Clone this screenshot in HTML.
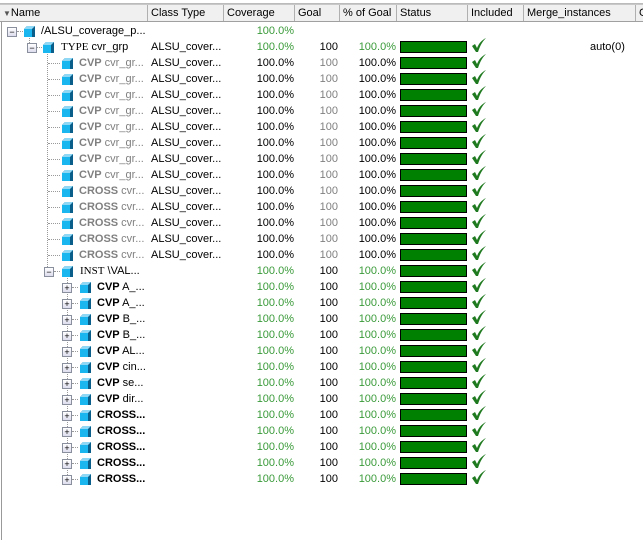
<!DOCTYPE html>
<html><head><meta charset="utf-8"><style>
body{margin:0;width:643px;height:540px;background:#fff;overflow:hidden;font-family:"Liberation Sans",sans-serif;font-size:11px;position:relative}
.a{position:absolute;white-space:nowrap}
.hd{position:absolute;top:4px;left:0;width:643px;height:16px;background:#f0f0f0;border-bottom:1px solid #a0a0a0;border-top:1px solid #c8c8c8}
.hc{position:absolute;top:0;height:16px;line-height:16px;border-right:1px solid #b0b0b0;padding-left:3px;box-sizing:border-box;color:#000}
.r{position:absolute;left:0;width:643px;height:16px;line-height:16px}
.ex{position:absolute;top:4px;width:8px;height:8px;border:1px solid #8a8f9e;background:linear-gradient(#fff,#dde);box-sizing:content-box;font-size:9px;line-height:8px;text-align:center;color:#000}
.ic{position:absolute;top:3px;width:11px;height:11px}
.g{color:#3a9a3a}.k{color:#000}.gr{color:#808080}
.n{position:absolute;text-align:right}
.bar{position:absolute;left:400px;top:2px;width:65px;height:10px;background:#008000;border:1px solid #000}
.ck{position:absolute;left:471px;top:-2px}
.vl{position:absolute;border-left:1px dotted #999}
.hl{position:absolute;border-top:1px dotted #999;height:0}
</style></head><body>
<div class="a" style="left:0;top:3px;width:643px;border-top:1px solid #bbb"></div>
<div class="a" style="left:1px;top:21px;height:519px;border-left:1px solid #999"></div>
<div class="hd">
<div class="hc" style="left:0;width:148px"><span style="font-size:8px;color:#555">▼</span>Name</div>
<div class="hc" style="left:148px;width:76px">Class Type</div>
<div class="hc" style="left:224px;width:71px">Coverage</div>
<div class="hc" style="left:295px;width:45px">Goal</div>
<div class="hc" style="left:340px;width:57px">% of Goal</div>
<div class="hc" style="left:397px;width:71px">Status</div>
<div class="hc" style="left:468px;width:56px">Included</div>
<div class="hc" style="left:524px;width:112px">Merge_instances</div>
<div class="hc" style="left:636px;width:20px">Ge</div>
</div>
<svg width="0" height="0" style="position:absolute"><defs><symbol id="cb" viewBox="0 0 11 11"><polygon points="3,0 11,0 11,11 0,11 0,3" fill="#0a5f8a"/><rect x="0" y="3" width="8" height="8" fill="#19b6f0"/><polygon points="0,3 3,0 11,0 8,3" fill="#8fd8f5"/></symbol>
<symbol id="tk" viewBox="0 0 16 16"><path d="M1 9 L4 7 L6 11 C8 6 11 3 15 1 C11 5 9 9 7 15 L5 15 Z" fill="#1f7a1f"/></symbol></defs></svg>
<div class="vl" style="left:29px;top:36px;height:11px"></div>
<div class="vl" style="left:47px;top:52px;height:219px"></div>
<div class="vl" style="left:67px;top:276px;height:203px"></div>

<div class="r" style="top:23px"><div class="ex" style="left:7px">−</div><div class="hl" style="left:17px;top:8px;width:6px"></div><svg class="ic" style="left:24px"><use href="#cb"/></svg><span class="a" style="left:41px">/ALSU_coverage_p...</span><span class="n g" style="left:224px;width:70px">100.0%</span></div>

<div class="r" style="top:39px"><div class="ex" style="left:27px">−</div><div class="hl" style="left:37px;top:8px;width:5px"></div><svg class="ic" style="left:43px"><use href="#cb"/></svg><span class="a" style="left:61px"><b style="font-family:'Liberation Serif',serif;font-weight:normal">TYPE</b> cvr_grp</span><span class="a" style="left:151px">ALSU_cover...</span><span class="n g" style="left:224px;width:70px">100.0%</span><span class="n k" style="left:295px;width:43px">100</span><span class="n g" style="left:340px;width:56px">100.0%</span><div class="bar"></div><svg class="ck" width="16" height="16"><use href="#tk"/></svg><span class="a" style="left:590px">auto(0)</span></div>

<div class="r" style="top:55px"><div class="hl" style="left:48px;top:8px;width:12px"></div><svg class="ic" style="left:62px"><use href="#cb"/></svg><span class="a gr" style="left:79px"><b>CVP</b> cvr_gr...</span><span class="a" style="left:151px">ALSU_cover...</span><span class="n k" style="left:224px;width:70px">100.0%</span><span class="n gr" style="left:295px;width:43px">100</span><span class="n k" style="left:340px;width:56px">100.0%</span><div class="bar"></div><svg class="ck" width="16" height="16"><use href="#tk"/></svg></div>
<div class="r" style="top:71px"><div class="hl" style="left:48px;top:8px;width:12px"></div><svg class="ic" style="left:62px"><use href="#cb"/></svg><span class="a gr" style="left:79px"><b>CVP</b> cvr_gr...</span><span class="a" style="left:151px">ALSU_cover...</span><span class="n k" style="left:224px;width:70px">100.0%</span><span class="n gr" style="left:295px;width:43px">100</span><span class="n k" style="left:340px;width:56px">100.0%</span><div class="bar"></div><svg class="ck" width="16" height="16"><use href="#tk"/></svg></div>
<div class="r" style="top:87px"><div class="hl" style="left:48px;top:8px;width:12px"></div><svg class="ic" style="left:62px"><use href="#cb"/></svg><span class="a gr" style="left:79px"><b>CVP</b> cvr_gr...</span><span class="a" style="left:151px">ALSU_cover...</span><span class="n k" style="left:224px;width:70px">100.0%</span><span class="n gr" style="left:295px;width:43px">100</span><span class="n k" style="left:340px;width:56px">100.0%</span><div class="bar"></div><svg class="ck" width="16" height="16"><use href="#tk"/></svg></div>
<div class="r" style="top:103px"><div class="hl" style="left:48px;top:8px;width:12px"></div><svg class="ic" style="left:62px"><use href="#cb"/></svg><span class="a gr" style="left:79px"><b>CVP</b> cvr_gr...</span><span class="a" style="left:151px">ALSU_cover...</span><span class="n k" style="left:224px;width:70px">100.0%</span><span class="n gr" style="left:295px;width:43px">100</span><span class="n k" style="left:340px;width:56px">100.0%</span><div class="bar"></div><svg class="ck" width="16" height="16"><use href="#tk"/></svg></div>
<div class="r" style="top:119px"><div class="hl" style="left:48px;top:8px;width:12px"></div><svg class="ic" style="left:62px"><use href="#cb"/></svg><span class="a gr" style="left:79px"><b>CVP</b> cvr_gr...</span><span class="a" style="left:151px">ALSU_cover...</span><span class="n k" style="left:224px;width:70px">100.0%</span><span class="n gr" style="left:295px;width:43px">100</span><span class="n k" style="left:340px;width:56px">100.0%</span><div class="bar"></div><svg class="ck" width="16" height="16"><use href="#tk"/></svg></div>
<div class="r" style="top:135px"><div class="hl" style="left:48px;top:8px;width:12px"></div><svg class="ic" style="left:62px"><use href="#cb"/></svg><span class="a gr" style="left:79px"><b>CVP</b> cvr_gr...</span><span class="a" style="left:151px">ALSU_cover...</span><span class="n k" style="left:224px;width:70px">100.0%</span><span class="n gr" style="left:295px;width:43px">100</span><span class="n k" style="left:340px;width:56px">100.0%</span><div class="bar"></div><svg class="ck" width="16" height="16"><use href="#tk"/></svg></div>
<div class="r" style="top:151px"><div class="hl" style="left:48px;top:8px;width:12px"></div><svg class="ic" style="left:62px"><use href="#cb"/></svg><span class="a gr" style="left:79px"><b>CVP</b> cvr_gr...</span><span class="a" style="left:151px">ALSU_cover...</span><span class="n k" style="left:224px;width:70px">100.0%</span><span class="n gr" style="left:295px;width:43px">100</span><span class="n k" style="left:340px;width:56px">100.0%</span><div class="bar"></div><svg class="ck" width="16" height="16"><use href="#tk"/></svg></div>
<div class="r" style="top:167px"><div class="hl" style="left:48px;top:8px;width:12px"></div><svg class="ic" style="left:62px"><use href="#cb"/></svg><span class="a gr" style="left:79px"><b>CVP</b> cvr_gr...</span><span class="a" style="left:151px">ALSU_cover...</span><span class="n k" style="left:224px;width:70px">100.0%</span><span class="n gr" style="left:295px;width:43px">100</span><span class="n k" style="left:340px;width:56px">100.0%</span><div class="bar"></div><svg class="ck" width="16" height="16"><use href="#tk"/></svg></div>
<div class="r" style="top:183px"><div class="hl" style="left:48px;top:8px;width:12px"></div><svg class="ic" style="left:62px"><use href="#cb"/></svg><span class="a gr" style="left:79px"><b>CROSS</b> cvr...</span><span class="a" style="left:151px">ALSU_cover...</span><span class="n k" style="left:224px;width:70px">100.0%</span><span class="n gr" style="left:295px;width:43px">100</span><span class="n k" style="left:340px;width:56px">100.0%</span><div class="bar"></div><svg class="ck" width="16" height="16"><use href="#tk"/></svg></div>
<div class="r" style="top:199px"><div class="hl" style="left:48px;top:8px;width:12px"></div><svg class="ic" style="left:62px"><use href="#cb"/></svg><span class="a gr" style="left:79px"><b>CROSS</b> cvr...</span><span class="a" style="left:151px">ALSU_cover...</span><span class="n k" style="left:224px;width:70px">100.0%</span><span class="n gr" style="left:295px;width:43px">100</span><span class="n k" style="left:340px;width:56px">100.0%</span><div class="bar"></div><svg class="ck" width="16" height="16"><use href="#tk"/></svg></div>
<div class="r" style="top:215px"><div class="hl" style="left:48px;top:8px;width:12px"></div><svg class="ic" style="left:62px"><use href="#cb"/></svg><span class="a gr" style="left:79px"><b>CROSS</b> cvr...</span><span class="a" style="left:151px">ALSU_cover...</span><span class="n k" style="left:224px;width:70px">100.0%</span><span class="n gr" style="left:295px;width:43px">100</span><span class="n k" style="left:340px;width:56px">100.0%</span><div class="bar"></div><svg class="ck" width="16" height="16"><use href="#tk"/></svg></div>
<div class="r" style="top:231px"><div class="hl" style="left:48px;top:8px;width:12px"></div><svg class="ic" style="left:62px"><use href="#cb"/></svg><span class="a gr" style="left:79px"><b>CROSS</b> cvr...</span><span class="a" style="left:151px">ALSU_cover...</span><span class="n k" style="left:224px;width:70px">100.0%</span><span class="n gr" style="left:295px;width:43px">100</span><span class="n k" style="left:340px;width:56px">100.0%</span><div class="bar"></div><svg class="ck" width="16" height="16"><use href="#tk"/></svg></div>
<div class="r" style="top:247px"><div class="hl" style="left:48px;top:8px;width:12px"></div><svg class="ic" style="left:62px"><use href="#cb"/></svg><span class="a gr" style="left:79px"><b>CROSS</b> cvr...</span><span class="a" style="left:151px">ALSU_cover...</span><span class="n k" style="left:224px;width:70px">100.0%</span><span class="n gr" style="left:295px;width:43px">100</span><span class="n k" style="left:340px;width:56px">100.0%</span><div class="bar"></div><svg class="ck" width="16" height="16"><use href="#tk"/></svg></div>

<div class="r" style="top:263px"><div class="ex" style="left:44px">−</div><div class="hl" style="left:54px;top:8px;width:6px"></div><svg class="ic" style="left:62px"><use href="#cb"/></svg><span class="a" style="left:80px"><span style="font-family:'Liberation Serif',serif">INST</span> \VAL...</span><span class="n g" style="left:224px;width:70px">100.0%</span><span class="n k" style="left:295px;width:43px">100</span><span class="n g" style="left:340px;width:56px">100.0%</span><div class="bar"></div><svg class="ck" width="16" height="16"><use href="#tk"/></svg></div>

<div class="r" style="top:279px"><div class="ex" style="left:62px">+</div><div class="hl" style="left:72px;top:8px;width:6px"></div><svg class="ic" style="left:80px"><use href="#cb"/></svg><span class="a" style="left:97px"><b>CVP</b> A_...</span><span class="n g" style="left:224px;width:70px">100.0%</span><span class="n k" style="left:295px;width:43px">100</span><span class="n g" style="left:340px;width:56px">100.0%</span><div class="bar"></div><svg class="ck" width="16" height="16"><use href="#tk"/></svg></div>
<div class="r" style="top:295px"><div class="ex" style="left:62px">+</div><div class="hl" style="left:72px;top:8px;width:6px"></div><svg class="ic" style="left:80px"><use href="#cb"/></svg><span class="a" style="left:97px"><b>CVP</b> A_...</span><span class="n g" style="left:224px;width:70px">100.0%</span><span class="n k" style="left:295px;width:43px">100</span><span class="n g" style="left:340px;width:56px">100.0%</span><div class="bar"></div><svg class="ck" width="16" height="16"><use href="#tk"/></svg></div>
<div class="r" style="top:311px"><div class="ex" style="left:62px">+</div><div class="hl" style="left:72px;top:8px;width:6px"></div><svg class="ic" style="left:80px"><use href="#cb"/></svg><span class="a" style="left:97px"><b>CVP</b> B_...</span><span class="n g" style="left:224px;width:70px">100.0%</span><span class="n k" style="left:295px;width:43px">100</span><span class="n g" style="left:340px;width:56px">100.0%</span><div class="bar"></div><svg class="ck" width="16" height="16"><use href="#tk"/></svg></div>
<div class="r" style="top:327px"><div class="ex" style="left:62px">+</div><div class="hl" style="left:72px;top:8px;width:6px"></div><svg class="ic" style="left:80px"><use href="#cb"/></svg><span class="a" style="left:97px"><b>CVP</b> B_...</span><span class="n g" style="left:224px;width:70px">100.0%</span><span class="n k" style="left:295px;width:43px">100</span><span class="n g" style="left:340px;width:56px">100.0%</span><div class="bar"></div><svg class="ck" width="16" height="16"><use href="#tk"/></svg></div>
<div class="r" style="top:343px"><div class="ex" style="left:62px">+</div><div class="hl" style="left:72px;top:8px;width:6px"></div><svg class="ic" style="left:80px"><use href="#cb"/></svg><span class="a" style="left:97px"><b>CVP</b> AL...</span><span class="n g" style="left:224px;width:70px">100.0%</span><span class="n k" style="left:295px;width:43px">100</span><span class="n g" style="left:340px;width:56px">100.0%</span><div class="bar"></div><svg class="ck" width="16" height="16"><use href="#tk"/></svg></div>
<div class="r" style="top:359px"><div class="ex" style="left:62px">+</div><div class="hl" style="left:72px;top:8px;width:6px"></div><svg class="ic" style="left:80px"><use href="#cb"/></svg><span class="a" style="left:97px"><b>CVP</b> cin...</span><span class="n g" style="left:224px;width:70px">100.0%</span><span class="n k" style="left:295px;width:43px">100</span><span class="n g" style="left:340px;width:56px">100.0%</span><div class="bar"></div><svg class="ck" width="16" height="16"><use href="#tk"/></svg></div>
<div class="r" style="top:375px"><div class="ex" style="left:62px">+</div><div class="hl" style="left:72px;top:8px;width:6px"></div><svg class="ic" style="left:80px"><use href="#cb"/></svg><span class="a" style="left:97px"><b>CVP</b> se...</span><span class="n g" style="left:224px;width:70px">100.0%</span><span class="n k" style="left:295px;width:43px">100</span><span class="n g" style="left:340px;width:56px">100.0%</span><div class="bar"></div><svg class="ck" width="16" height="16"><use href="#tk"/></svg></div>
<div class="r" style="top:391px"><div class="ex" style="left:62px">+</div><div class="hl" style="left:72px;top:8px;width:6px"></div><svg class="ic" style="left:80px"><use href="#cb"/></svg><span class="a" style="left:97px"><b>CVP</b> dir...</span><span class="n g" style="left:224px;width:70px">100.0%</span><span class="n k" style="left:295px;width:43px">100</span><span class="n g" style="left:340px;width:56px">100.0%</span><div class="bar"></div><svg class="ck" width="16" height="16"><use href="#tk"/></svg></div>
<div class="r" style="top:407px"><div class="ex" style="left:62px">+</div><div class="hl" style="left:72px;top:8px;width:6px"></div><svg class="ic" style="left:80px"><use href="#cb"/></svg><span class="a" style="left:97px"><b>CROSS...</b></span><span class="n g" style="left:224px;width:70px">100.0%</span><span class="n k" style="left:295px;width:43px">100</span><span class="n g" style="left:340px;width:56px">100.0%</span><div class="bar"></div><svg class="ck" width="16" height="16"><use href="#tk"/></svg></div>
<div class="r" style="top:423px"><div class="ex" style="left:62px">+</div><div class="hl" style="left:72px;top:8px;width:6px"></div><svg class="ic" style="left:80px"><use href="#cb"/></svg><span class="a" style="left:97px"><b>CROSS...</b></span><span class="n g" style="left:224px;width:70px">100.0%</span><span class="n k" style="left:295px;width:43px">100</span><span class="n g" style="left:340px;width:56px">100.0%</span><div class="bar"></div><svg class="ck" width="16" height="16"><use href="#tk"/></svg></div>
<div class="r" style="top:439px"><div class="ex" style="left:62px">+</div><div class="hl" style="left:72px;top:8px;width:6px"></div><svg class="ic" style="left:80px"><use href="#cb"/></svg><span class="a" style="left:97px"><b>CROSS...</b></span><span class="n g" style="left:224px;width:70px">100.0%</span><span class="n k" style="left:295px;width:43px">100</span><span class="n g" style="left:340px;width:56px">100.0%</span><div class="bar"></div><svg class="ck" width="16" height="16"><use href="#tk"/></svg></div>
<div class="r" style="top:455px"><div class="ex" style="left:62px">+</div><div class="hl" style="left:72px;top:8px;width:6px"></div><svg class="ic" style="left:80px"><use href="#cb"/></svg><span class="a" style="left:97px"><b>CROSS...</b></span><span class="n g" style="left:224px;width:70px">100.0%</span><span class="n k" style="left:295px;width:43px">100</span><span class="n g" style="left:340px;width:56px">100.0%</span><div class="bar"></div><svg class="ck" width="16" height="16"><use href="#tk"/></svg></div>
<div class="r" style="top:471px"><div class="ex" style="left:62px">+</div><div class="hl" style="left:72px;top:8px;width:6px"></div><svg class="ic" style="left:80px"><use href="#cb"/></svg><span class="a" style="left:97px"><b>CROSS...</b></span><span class="n g" style="left:224px;width:70px">100.0%</span><span class="n k" style="left:295px;width:43px">100</span><span class="n g" style="left:340px;width:56px">100.0%</span><div class="bar"></div><svg class="ck" width="16" height="16"><use href="#tk"/></svg></div>
</body></html>
